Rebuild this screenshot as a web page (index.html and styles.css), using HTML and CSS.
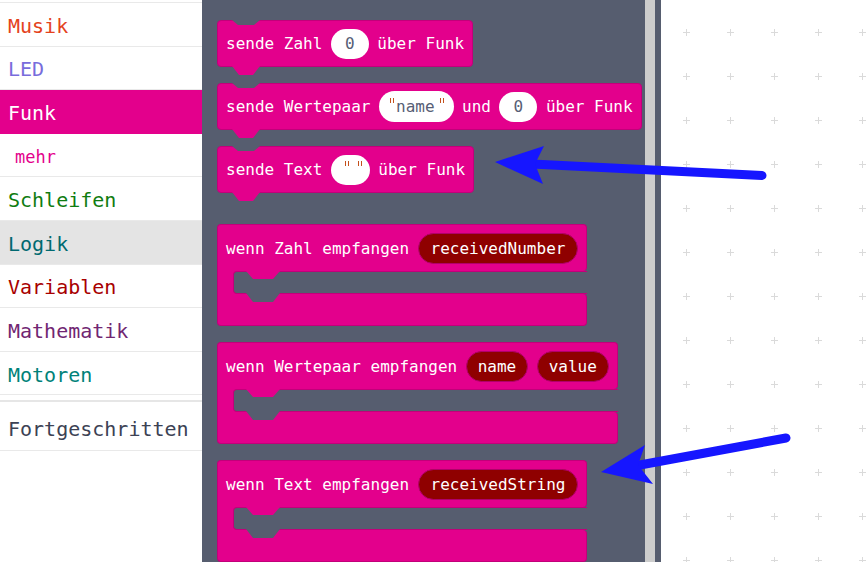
FILE: index.html
```html
<!DOCTYPE html>
<html lang="de">
<head>
<meta charset="utf-8">
<title>Funk</title>
<link rel="stylesheet" href="styles.css">
</head>
<body>
<nav class="toolbox">
  <div class="tb-list">
    <div class="tb-item c-musik">Musik</div>
    <div class="tb-item c-led">LED</div>
    <div class="tb-item funk">Funk</div>
    <div class="tb-item sub">mehr</div>
    <div class="tb-item c-loop">Schleifen</div>
    <div class="tb-item c-logic hover">Logik</div>
    <div class="tb-item c-var">Variablen</div>
    <div class="tb-item c-math">Mathematik</div>
    <div class="tb-item c-motor">Motoren</div>
  </div>
  <div class="tb-sep"></div>
  <div class="tb-item adv">Fortgeschritten</div>
</nav>

<section class="flyout">
  <div class="blocks">
    <div class="block">
      <span>sende Zahl</span><span class="num">0</span><span>über Funk</span>
    </div>
    <div class="block">
      <span>sende Wertepaar</span><span class="str"><i class="q"></i><span class="str-t">name</span><i class="q"></i></span><span>und</span><span class="num">0</span><span>über Funk</span>
    </div>
    <div class="block">
      <span>sende Text</span><span class="str empty"><i class="q"></i><i class="q"></i></span><span>über Funk</span>
    </div>

    <div class="hat first">
      <div class="hat-head"><span>wenn Zahl empfangen</span><span class="var wide">receivedNumber</span></div>
      <div class="hat-slot"><div class="hole"></div></div>
      <div class="hat-foot"></div>
    </div>
    <div class="hat">
      <div class="hat-head"><span>wenn Wertepaar empfangen</span><span class="var">name</span><span class="var">value</span></div>
      <div class="hat-slot"><div class="hole"></div></div>
      <div class="hat-foot"></div>
    </div>
    <div class="hat">
      <div class="hat-head"><span>wenn Text empfangen</span><span class="var wide">receivedString</span></div>
      <div class="hat-slot"><div class="hole"></div></div>
      <div class="hat-foot"></div>
    </div>
  </div>
  <div class="scroll"></div>
</section>

<main class="workspace"></main>

<svg class="arrows" width="867" height="562" viewBox="0 0 867 562" aria-hidden="true">
  <g fill="#1616ff" stroke="#1616ff" stroke-linecap="round">
    <line x1="762" y1="175.5" x2="532" y2="164" stroke-width="9"/>
    <polygon points="495,162 544,146 535,164 543,184" stroke="none"/>
    <line x1="786" y1="438" x2="640" y2="465" stroke-width="9"/>
    <polygon points="601,472 645,445 638,465 653,484" stroke="none"/>
  </g>
</svg>
</body>
</html>
```

FILE: styles.css
```css
* { box-sizing: border-box; }
html, body { margin: 0; padding: 0; }
body {
  width: 867px;
  height: 562px;
  overflow: hidden;
  position: relative;
  display: flex;
  font-family: "DejaVu Sans Mono", monospace;
  background: #fff;
}

/* ---------- toolbox ---------- */
.toolbox {
  width: 202px;
  flex: none;
  background: #fff;
  padding-top: 2px;
}
.tb-list { border-top: 1px solid #e9e9e9; }
.tb-item {
  height: 43.6px;
  border-bottom: 1px solid #e9e9e9;
  display: flex;
  align-items: center;
  padding: 3px 0 0 8px;
  font-size: 20px;
  white-space: nowrap;
}
.c-musik { color: #e4421c; }
.c-led { color: #786cdc; }
.funk { background: #e3008c; color: #fff; border-bottom-color: #e3008c; }
.sub { color: #e3008c; font-size: 17px; padding-left: 15px; }
.c-loop { color: #107c10; }
.c-logic { color: #006970; }
.hover { background: #e4e4e4; }
.c-var { color: #a80000; }
.c-math { color: #712672; }
.c-motor { color: #008279; }
.tb-sep { margin-top: 5px; border-top: 2px solid #e6e6e6; }
.adv { height: 49px; padding-top: 6px; color: #3c4254; }

/* ---------- flyout ---------- */
.flyout {
  width: 459px;
  flex: none;
  background: #565d6f;
  display: flex;
}
.blocks {
  flex: 1;
  min-height: 0;
  padding: 20px 0 0 15px;
  display: flex;
  flex-direction: column;
  align-items: flex-start;
  font-size: 16px;
  color: #fff;
  white-space: nowrap;
}
.scroll {
  width: 10px;
  background: #cdcdcd;
  margin-right: 6px;
}

.block {
  position: relative;
  flex: none;
  height: 47px;
  display: flex;
  align-items: center;
  gap: 8.5px;
  padding: 0 8px;
  background: #e3008c;
  border: 1px solid #c2007a;
  border-radius: 4px;
  margin-bottom: 16px;
}
.block::before {
  content: "";
  position: absolute;
  top: -1px;
  left: 14px;
  width: 28px;
  height: 5px;
  background: #565d6f;
  clip-path: polygon(0 0, 100% 0, calc(100% - 6px) 100%, 6px 100%);
}
.block::after {
  content: "";
  position: absolute;
  bottom: -9px;
  left: 14px;
  width: 28px;
  height: 9px;
  background: #e3008c;
  clip-path: polygon(0 0, 100% 0, calc(100% - 7px) 100%, 7px 100%);
}

.num {
  height: 30px;
  min-width: 38px;
  padding: 0 14px;
  border-radius: 15px;
  background: #fff;
  color: #575e75;
  display: flex;
  align-items: center;
  justify-content: center;
}
.str {
  height: 31px;
  padding: 0 10px 0 11px;
  border-radius: 16px;
  background: #fff;
  color: #575e75;
  display: flex;
  align-items: center;
  gap: 2px;
}
.str .str-t { margin-right: 3px; }
.str.empty { padding: 0 8px 0 14px; gap: 9px; height: 30px; }
.q {
  display: block;
  width: 4px;
  height: 5px;
  border-left: 1.5px solid #c4501c;
  border-right: 1.5px solid #c4501c;
  margin-bottom: 12px;
}

/* ---------- event (hat) blocks ---------- */
.hat {
  flex: none;
  display: flex;
  flex-direction: column;
  margin-bottom: 16px;
}
.hat.first { margin-top: 15px; }
.hat-head {
  flex: none;
  height: 47px;
  display: flex;
  align-items: center;
  gap: 8.5px;
  padding: 0 8px;
  background: #e3008c;
  border: 1px solid #c2007a;
  border-bottom: none;
  border-radius: 4px 4px 4px 0;
}
.hat-slot {
  flex: none;
  height: 23px;
  display: flex;
  background: linear-gradient(to right, #e3008c 24px, transparent 24px);
  border-left: 1px solid #c2007a;
}
.hole {
  position: relative;
  z-index: 1;
  flex: 1;
  margin-left: 15px;
  background: #565d6f;
  border: 1px solid #c2007a;
  border-right: none;
  border-radius: 4px 0 0 4px;
}
.hole::before {
  content: "";
  position: absolute;
  top: -1px;
  left: 12px;
  width: 34px;
  height: 8px;
  background: #e3008c;
  clip-path: polygon(0 0, 100% 0, calc(100% - 7px) 100%, 7px 100%);
}
.hole::after {
  content: "";
  position: absolute;
  bottom: -9px;
  left: 12px;
  width: 34px;
  height: 9px;
  background: #565d6f;
  clip-path: polygon(0 0, 100% 0, calc(100% - 7px) 100%, 7px 100%);
}
.hat-foot {
  flex: none;
  height: 32px;
  background: #e3008c;
  border: 1px solid #c2007a;
  border-top: none;
  border-radius: 0 4px 4px 4px;
}
.var {
  height: 31px;
  padding: 0 11px;
  border-radius: 16px;
  background: #8f0000;
  border: 1px solid #b0006a;
  display: flex;
  align-items: center;
  color: #fff;
}
.var.wide { padding: 0 12px; }

/* ---------- workspace ---------- */
.workspace {
  flex: 1;
  background-color: #fff;
  background-image: url("data:image/svg+xml;utf8,<svg xmlns='http://www.w3.org/2000/svg' width='44' height='44'><path d='M22.5 19v7M19 22.5h7' stroke='%23dadada' stroke-width='1' fill='none'/></svg>");
  background-size: 44px 44px;
  background-position: 3px 10px;
}

.arrows {
  position: absolute;
  left: 0;
  top: 0;
  pointer-events: none;
}
```
